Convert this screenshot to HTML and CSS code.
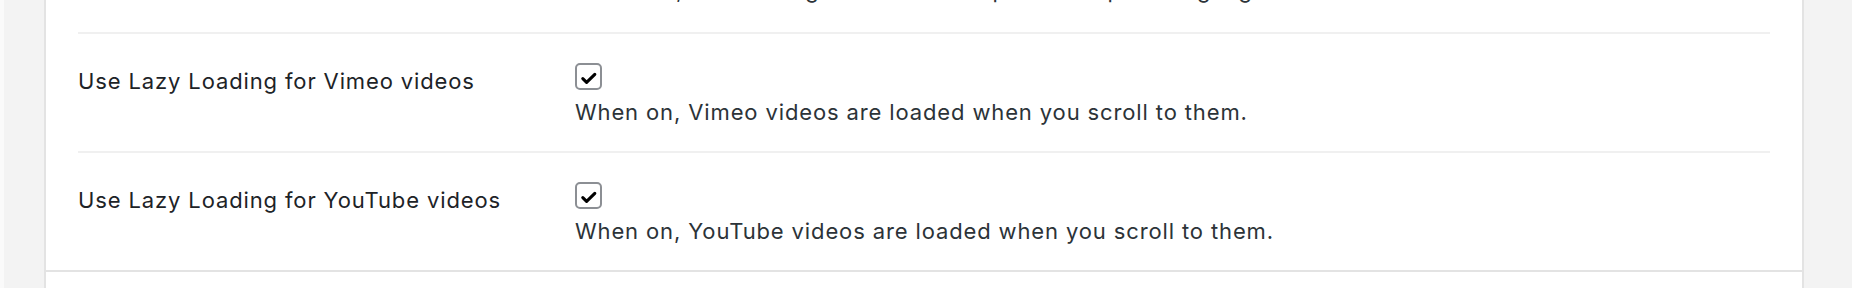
FILE: index.html
```html
<!DOCTYPE html>
<html lang="en">
<head>
<meta charset="utf-8">
<title>Lazy Loading settings</title>
<link rel="stylesheet" href="styles.css">
</head>
<body>
<main class="panel">
  <div class="rows">
    <div class="row row-prev">
      <div class="label"></div>
      <div class="field">
        <span class="checkbox"><svg viewBox="0 0 27 27" width="27" height="27"><path d="M7.8 15.6 L11.6 19.4 L19.8 11.4" fill="none" stroke="#000" stroke-width="3.1" stroke-linecap="round" stroke-linejoin="round"/></svg></span>
        <p class="description">When off, all the images are loaded up to the top in a big log.</p>
      </div>
    </div>
    <div class="row">
      <div class="label">Use Lazy Loading for Vimeo videos</div>
      <div class="field">
        <span class="checkbox"><svg viewBox="0 0 27 27" width="27" height="27"><path d="M7.8 15.6 L11.6 19.4 L19.8 11.4" fill="none" stroke="#000" stroke-width="3.1" stroke-linecap="round" stroke-linejoin="round"/></svg></span>
        <p class="description">When on, Vimeo videos are loaded when you scroll to them.</p>
      </div>
    </div>
    <div class="row">
      <div class="label">Use Lazy Loading for YouTube videos</div>
      <div class="field">
        <span class="checkbox"><svg viewBox="0 0 27 27" width="27" height="27"><path d="M7.8 15.6 L11.6 19.4 L19.8 11.4" fill="none" stroke="#000" stroke-width="3.1" stroke-linecap="round" stroke-linejoin="round"/></svg></span>
        <p class="description">When on, YouTube videos are loaded when you scroll to them.</p>
      </div>
    </div>
  </div>
  <div class="panel-footer"></div>
</main>
</body>
</html>
```
FILE: styles.css
```css
html, body {
  height: 100%;
}
body {
  margin: 0;
  background: #f3f3f3;
  border-left: 4px solid #fafafa;
  padding: 0 48px 0 40px;
  display: flex;
  font-family: "Inter", "Noto Sans", sans-serif;
  font-size: 22px;
  letter-spacing: 0.87px;
  line-height: 30px;
  color: #1d2327;
  overflow: hidden;
}
.panel {
  flex: 1;
  background: #fff;
  border-left: 2px solid #e3e3e3;
  border-right: 2px solid #e3e3e3;
  display: flex;
  flex-direction: column;
  margin-top: -90px;
}
.rows {
  padding: 0 32px;
}
.row {
  display: flex;
  border-top: 2px solid #f0f0f0;
  padding: 29px 0 24px;
}
.row-prev {
  padding-bottom: 27px;
}
.label {
  width: 497px;
  flex: none;
  padding-top: 3px;
}
.field {
  display: flex;
  flex-direction: column;
  align-items: flex-start;
}
.checkbox {
  box-sizing: border-box;
  width: 27px;
  height: 27px;
  border: 2px solid #8c8f94;
  border-radius: 5px;
  margin-bottom: 7px;
  position: relative;
  background: #fff;
}
.checkbox svg {
  position: absolute;
  left: -2px;
  top: -2px;
}
.description {
  margin: 0;
  color: #2c3338;
}
.panel-footer {
  border-top: 2px solid #e3e3e3;
  flex: 1;
}
```
